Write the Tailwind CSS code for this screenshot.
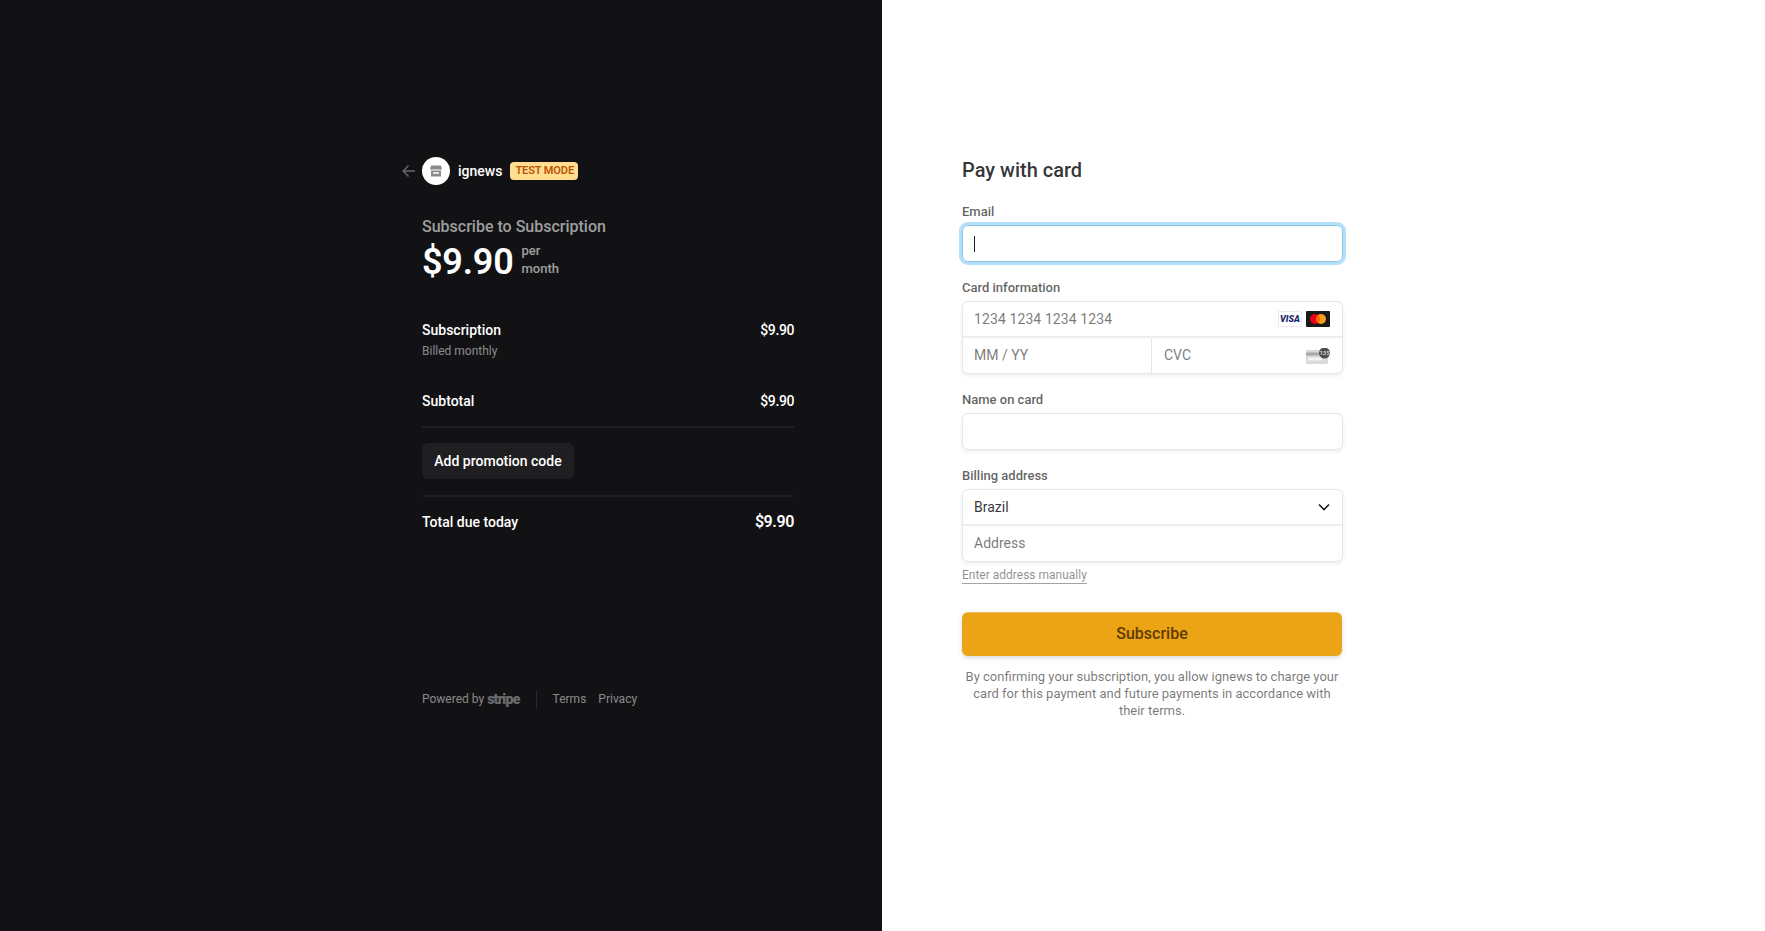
<!DOCTYPE html>
<html lang="en">

<head>
    <meta charset="UTF-8">
    <meta name="viewport" content="width=device-width, initial-scale=1.0">
    <script src="https://cdn.jsdelivr.net/npm/@tailwindcss/browser@4"></script>
    <title>Subscribe to Subscription</title>
</head>

<body class="font-[Roboto,sans-serif]">
    <div class="flex h-[931px] overflow-hidden">
        <!-- left: order summary -->
        <div class="w-[882px] h-full bg-[#121214] flex justify-end pr-[88px] pt-[157px]">
            <div class="w-[372px] relative">
                <div class="flex items-center h-[28px]">
                    <svg class="absolute left-[-20.5px] top-[7px] w-[14px] h-[14px]" viewBox="0 0 14 14" fill="none" stroke="#6b6b6d" stroke-width="1.4">
                        <path d="M13 7H1.5M6.5 1.5L1.2 7l5.3 5.5" />
                    </svg>
                    <div class="w-[28px] h-[28px] rounded-full bg-white flex items-center justify-center">
                        <svg class="w-[14px] h-[14px]" viewBox="0 0 14 14" fill="#8a8a8c">
                            <path d="M2.2 1.5h9.6l1 2.6v1.4h-11.6v-1.4z" />
                            <path d="M2 6.4h10v6.1H2zM4 8.2v1.6h6V8.2z" fill-rule="evenodd" />
                        </svg>
                    </div>
                    <span class="ml-2 text-[14px] leading-[20px] font-medium text-white">ignews</span>
                    <span class="ml-2 h-[18px] pl-[5px] pr-[4px] rounded-[4px] bg-[#ffde92] text-[11px] leading-[17px] font-semibold tracking-[-0.1px] text-[#bb5504] uppercase">Test mode</span>
                </div>

                <div class="mt-[30px] text-[16px] leading-[24px] font-medium text-white/60">Subscribe to Subscription</div>
                <div class="flex items-center mt-[1px]">
                    <span class="text-[36px] leading-[44px] font-semibold tracking-[-0.2px] text-white">$9.90</span>
                    <span class="ml-2 -mt-[4px] text-[13px] leading-[18px] font-medium text-white/60">per<br>month</span>
                </div>

                <div class="flex justify-between mt-[36px] text-[14px] leading-[20px] font-medium text-white">
                    <span>Subscription</span>
                    <span class="tracking-[-0.4px]">$9.90</span>
                </div>
                <div class="mt-[2px] text-[12px] leading-[18px] text-white/50">Billed monthly</div>

                <div class="flex justify-between mt-[31px] pb-[15px] text-[14px] leading-[20px] font-medium text-white border-b-2 border-[#1f1f21]">
                    <span>Subtotal</span>
                    <span class="tracking-[-0.4px]">$9.90</span>
                </div>

                <div class="pt-[15px] pb-[16px] border-b-2 border-[#1f1f21]">
                    <button class="h-[36px] w-[152px] rounded-md bg-[#1f1f22] text-[14px] font-medium text-white">Add promotion code</button>
                </div>

                <div class="flex justify-between items-center mt-[13px] text-white font-medium">
                    <span class="text-[14px] leading-[24px]">Total due today</span>
                    <span class="text-[16px] leading-[24px] font-semibold tracking-[-0.4px]">$9.90</span>
                </div>

                <div class="flex items-center mt-[156px] text-[12px] leading-[18px] text-white/50">
                    <span>Powered by</span>
                    <span class="ml-[3px] text-[14px] font-black tracking-[-0.7px] text-white/40">stripe</span>
                    <span class="ml-4 h-[18px] w-px bg-[#2a2a2c]"></span>
                    <span class="ml-4">Terms</span>
                    <span class="ml-3">Privacy</span>
                </div>
            </div>
        </div>

        <!-- right: payment form -->
        <div class="flex-1 h-full bg-white pl-[80px] pt-[156px]">
            <div class="w-[381px]">
                <h2 class="text-[20px] leading-[28px] font-medium text-[#1a1a1a]/90">Pay with card</h2>

                <label class="block mt-[18px] text-[13px] leading-[20px] font-medium text-[#1a1a1a]/70">Email</label>
                <div class="mt-[3px] h-[37px] rounded-md border border-[#8cc4e4] shadow-[0_0_0_3px_rgba(1,150,237,0.3)] flex items-center pl-[11px]">
                    <span class="w-px h-[16px] bg-[#1a1a1a]"></span>
                </div>

                <label class="block mt-[16px] text-[13px] leading-[20px] font-medium text-[#1a1a1a]/70">Card information</label>
                <div class="mt-[3px] rounded-md border border-[#e6e6e6] shadow-[0_2px_4px_rgba(0,0,0,0.07)]">
                    <div class="h-[36px] flex items-center justify-between pl-[11px] pr-[12px] border-b-2 border-[#eeeeee]">
                        <span class="text-[14px] tracking-[0.1px] text-[#1a1a1a]/60">1234 1234 1234 1234</span>
                        <div class="flex gap-[4px]">
                            <svg class="w-[24px] h-[16px]" viewBox="0 0 24 16">
                                <rect x="0.5" y="0.5" width="23" height="15" fill="#fff" stroke="#ececf0" />
                                <text x="12" y="11" text-anchor="middle" font-family="Roboto" font-size="9" font-weight="900" font-style="italic" fill="#1a1f71">VISA</text>
                            </svg>
                            <svg class="w-[24px] h-[16px]" viewBox="0 0 24 16">
                                <rect width="24" height="16" rx="1" fill="#1a1a1a" />
                                <circle cx="9" cy="8" r="5" fill="#eb001b" />
                                <circle cx="15" cy="8" r="5" fill="#f79e1b" />
                                <path d="M12 4a5 5 0 0 1 0 8a5 5 0 0 1 0-8z" fill="#ff5f00" />
                            </svg>
                        </div>
                    </div>
                    <div class="h-[35px] flex">
                        <div class="w-[189px] flex items-center pl-[11px] border-r border-[#e6e6e6] text-[14px] text-[#1a1a1a]/60">MM / YY</div>
                        <div class="flex-1 flex items-center justify-between pl-[12px] pr-[12px] text-[14px] text-[#1a1a1a]/60">
                            <span>CVC</span>
                            <svg class="w-[24px] h-[16px]" viewBox="0 0 24 16">
                                <rect x="0" y="2" width="22" height="14" rx="1" fill="#d9d9d9" />
                                <rect x="0" y="4.5" width="22" height="3" fill="#a8a8a8" />
                                <rect x="2" y="9.5" width="14" height="3" fill="#f5f5f5" />
                                <circle cx="18.5" cy="5" r="5.5" fill="#4f4f4f" />
                                <text x="18.5" y="7" text-anchor="middle" font-family="Roboto" font-size="6" fill="#eee">135</text>
                            </svg>
                        </div>
                    </div>
                </div>

                <label class="block mt-[16px] text-[13px] leading-[20px] font-medium text-[#1a1a1a]/70">Name on card</label>
                <div class="mt-[3px] h-[37px] rounded-md border border-[#e6e6e6] shadow-[0_2px_4px_rgba(0,0,0,0.07)]"></div>

                <label class="block mt-[16px] text-[13px] leading-[20px] font-medium text-[#1a1a1a]/70">Billing address</label>
                <div class="mt-[3px] rounded-md border border-[#e6e6e6] shadow-[0_2px_4px_rgba(0,0,0,0.07)]">
                    <div class="h-[36px] flex items-center justify-between pl-[11px] pr-[12px] border-b-2 border-[#eeeeee]">
                        <span class="text-[14px] text-[#1a1a1a]/90">Brazil</span>
                        <svg class="w-[12px] h-[12px]" viewBox="0 0 12 12" fill="none" stroke="#1a1a1a" stroke-width="1.6">
                            <path d="M1 3.5L6 8.5l5-5" />
                        </svg>
                    </div>
                    <div class="h-[35px] flex items-center pl-[11px] text-[14px] text-[#1a1a1a]/60">Address</div>
                </div>
                <a class="block mt-[6px] w-fit text-[12px] leading-[15px] text-[#1a1a1a]/50 border-b border-[#1a1a1a]/40">Enter address manually</a>

                <button class="block mt-[28px] w-[380px] h-[44px] pb-[2px] rounded-md bg-[#eaa416] border-t border-[#eebb5c] shadow-[0_2px_4px_rgba(0,0,0,0.15)] text-[16px] font-medium text-[#5e3b00]">Subscribe</button>

                <p class="mt-[12px] w-[380px] text-center text-[13px] leading-[17px] text-[#1a1a1a]/60">By confirming your subscription, you allow ignews to charge your card for this payment and future payments in accordance with their terms.</p>
            </div>
        </div>
    </div>
</body>

</html>
